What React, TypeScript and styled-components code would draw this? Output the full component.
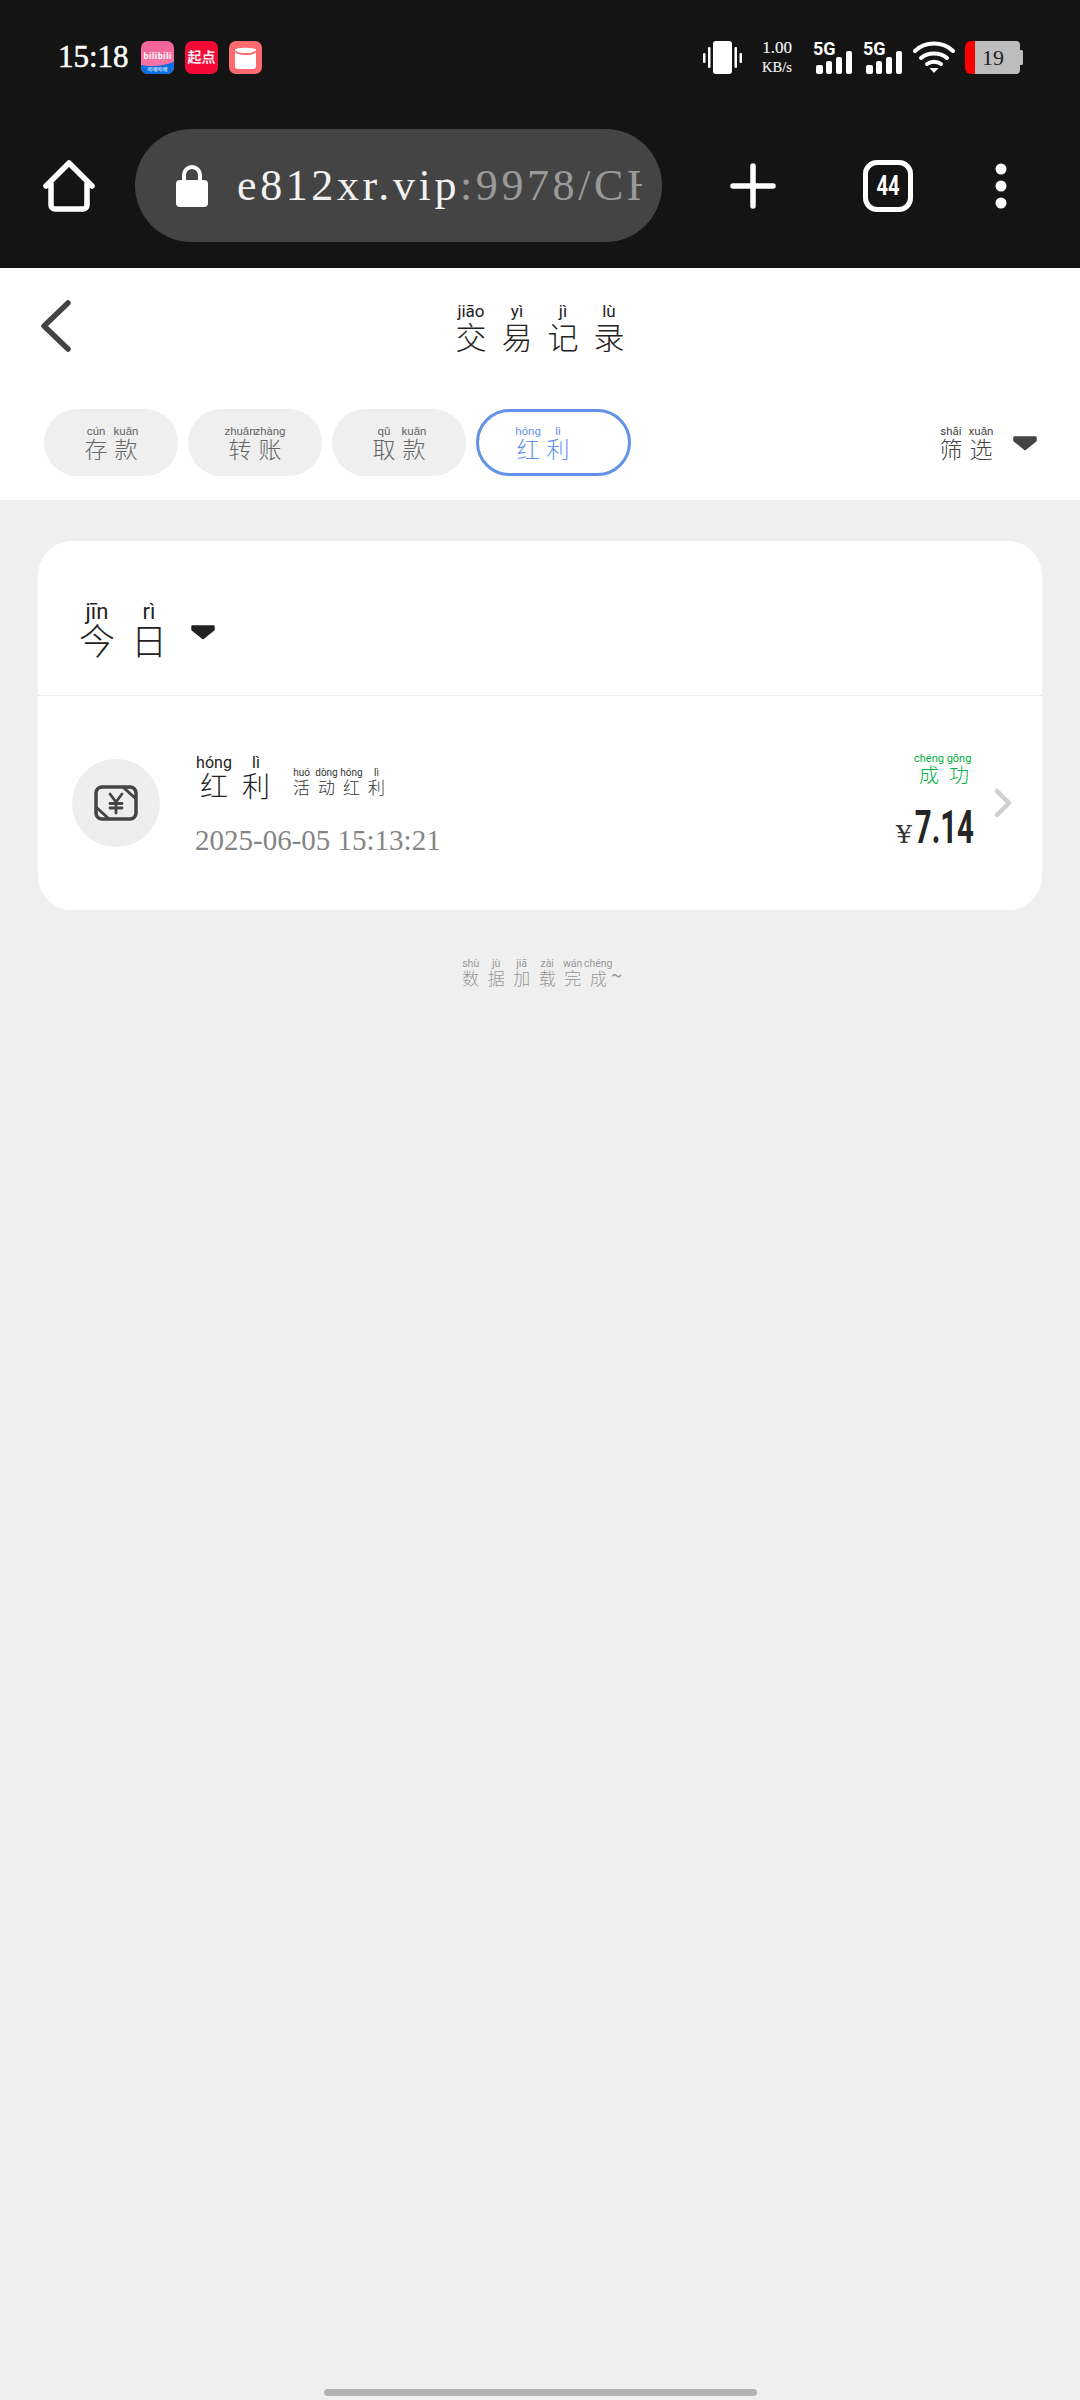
import React from "react";
import styled, { createGlobalStyle } from "styled-components";

const GlobalStyle = createGlobalStyle`
  html, body {
    margin: 0;
    padding: 0;
    background: #efefef;
  }
  * {
    box-sizing: border-box;
  }
`;

const WORD_SIZES = {
  title: { pitch: 46, han: 31, py: 17, pyLine: 18 },
  tab: { pitch: 30, han: 23, py: 11.5, pyLine: 12 },
  today: { pitch: 52, han: 36, py: 22, pyLine: 18 },
  rowTitle: { pitch: 42, han: 28, py: 16, pyLine: 16 },
  rowSub: { pitch: 25, han: 17, py: 10, pyLine: 10 },
  status: { pitch: 30, han: 20, py: 11, pyLine: 12 },
  footer: { pitch: 25.5, han: 17, py: 10.5, pyLine: 10 },
};

type WordSize = keyof typeof WORD_SIZES;

const Page = styled.div`
  width: 1080px;
  height: 2400px;
  display: flex;
  flex-direction: column;
  background: #efefef;
  font-family: "Noto Sans CJK SC", "Liberation Sans", sans-serif;
  overflow: hidden;
`;

const TopBar = styled.header`
  height: 268px;
  flex: none;
  background: #141414;
  padding-top: 40px;
`;

const StatusRow = styled.div`
  height: 34px;
  display: flex;
  align-items: center;
  padding-left: 58px;
`;

const Clock = styled.span`
  width: 83px;
  font: 400 31px/34px "Liberation Serif", serif;
  -webkit-text-stroke: 0.5px #fff;
  color: #fff;
`;

const AppIcons = styled.div`
  display: flex;
  gap: 11px;
`;

const StatusIcons = styled.div`
  display: flex;
  align-items: center;
  gap: 10px;
  margin-left: auto;
  padding-right: 57px;
`;

const NetSpeed = styled.div`
  width: 30px;
  margin: 0 11px 0 10px;
  display: flex;
  flex-direction: column;
  align-items: center;
  font-family: "Liberation Serif", serif;
  color: #eee;
`;

const NetValue = styled.span`
  font-size: 17px;
  line-height: 19px;
  -webkit-text-stroke: 0.2px #eee;
`;

const NetUnit = styled.span`
  font-size: 14.500px;
  line-height: 20px;
  white-space: nowrap;
  -webkit-text-stroke: 0.2px #eee;
`;

const Toolbar = styled.div`
  display: flex;
  align-items: center;
  margin-top: 55px;
  padding-left: 43px;
`;

const AddressPill = styled.div`
  width: 527px;
  height: 113px;
  margin-left: 40px;
  padding-left: 41px;
  display: flex;
  align-items: center;
  gap: 29px;
  border-radius: 57px;
  background: #444;
`;

const AddressText = styled.div`
  width: 405px;
  overflow: hidden;
  white-space: nowrap;
  font: 400 44px/56px "Liberation Serif", serif;
  letter-spacing: 3.6px;
  color: #f2f2f2;
`;

const AddressRest = styled.span`
  color: #9a9a9a;
`;

const PlusWrap = styled.div`
  margin-left: 68px;
  display: flex;
`;

const TabsCount = styled.div`
  width: 50px;
  height: 52px;
  margin-left: 87px;
  display: flex;
  align-items: center;
  justify-content: center;
  border: 5px solid #fff;
  border-radius: 14px;
  color: #fff;
`;

const TabsNumber = styled.span`
  display: inline-block;
  font: 700 28px/30px "Roboto", sans-serif;
  transform: scaleX(0.72);
`;

const DotsWrap = styled.div`
  margin-left: 82px;
  display: flex;
`;

const NavPanel = styled.section`
  height: 232px;
  flex: none;
  background: #fff;
  padding-top: 34px;
`;

const TitleRow = styled.div`
  display: grid;
  grid-template-columns: 1fr auto 1fr;
  align-items: start;
  height: 107px;
`;

const BackSlot = styled.div`
  padding: 0 0 0 41px;
  display: flex;
  margin-top: -2px;
`;

const TabRow = styled.div`
  display: flex;
  align-items: center;
  gap: 10px;
  padding: 0 42px 0 44px;
`;

const Tab = styled.div<{ $active?: boolean }>`
  height: 67px;
  display: flex;
  align-items: center;
  padding: ${(p) => (p.$active ? "0 55px 0 34px" : "0 37px")};
  border-radius: 34px;
  background: ${(p) => (p.$active ? "#fff" : "#efefef")};
  border: ${(p) => (p.$active ? "3px solid #6293e8" : "none")};
`;

const Filter = styled.div`
  margin-left: auto;
  display: flex;
  align-items: center;
  gap: 16px;
`;

const Card = styled.section`
  margin: 41px 38px 0;
  height: 369px;
  flex: none;
  border-radius: 34px;
  background: #fff;
`;

const CardHead = styled.div`
  height: 155px;
  display: flex;
  align-items: flex-start;
  gap: 15px;
  padding: 62px 0 0 33px;
  border-bottom: 1px solid #eaeaea;
`;

const CaretSlot = styled.div`
  padding-top: 21px;
  display: flex;
`;

const RecordRow = styled.div`
  height: 214px;
  display: flex;
  align-items: center;
  padding: 0 30px 0 34px;
`;

const IconCircle = styled.div`
  width: 88px;
  height: 88px;
  flex: none;
  display: flex;
  align-items: center;
  justify-content: center;
  border-radius: 50%;
  background: #eee;
`;

const RecordBody = styled.div`
  margin-left: 33px;
  padding-top: 6px;
  display: flex;
  flex-direction: column;
  gap: 24px;
`;

const RecordTitle = styled.div`
  display: flex;
  align-items: flex-end;
  gap: 12px;
`;

const RecordSub = styled.div`
  padding-bottom: 4px;
`;

const RecordDate = styled.div`
  margin-left: 2px;
  font: 400 29px/34px "Liberation Serif", serif;
  color: #858585;
`;

const RecordSide = styled.div`
  margin-left: auto;
  padding-bottom: 4px;
  display: flex;
  flex-direction: column;
  align-items: flex-end;
  gap: 20px;
`;

const Amount = styled.div`
  display: flex;
  align-items: baseline;
  gap: 4px;
  color: #262626;
`;

const Currency = styled.span`
  font: 400 25px/30px "DejaVu Serif", serif;
  color: #333;
`;

const AmountValue = styled.span`
  display: inline-block;
  width: 58px;
  font: 700 46px/44px "Roboto", sans-serif;
  white-space: nowrap;
  direction: rtl;
  transform: scaleX(0.64);
  transform-origin: right center;
`;

const RowArrow = styled.div`
  margin-left: 20px;
  display: flex;
`;

const FooterNote = styled.div`
  margin-top: 49px;
  display: flex;
  justify-content: center;
  align-items: flex-end;
  color: #999;
`;

const Tilde = styled.span`
  font-size: 20px;
  line-height: 22px;
`;

const HomeIndicator = styled.div`
  width: 433px;
  height: 7px;
  margin: auto auto 4px;
  border-radius: 4px;
  background: #b2b2b2;
`;

const WordRow = styled.div<{ $color: string }>`
  display: inline-flex;
  color: ${(p) => p.$color};
`;

const Cell = styled.div<{ $size: WordSize }>`
  width: ${(p) => WORD_SIZES[p.$size].pitch}px;
  display: flex;
  flex-direction: column;
  align-items: center;
`;

const Pinyin = styled.span<{ $size: WordSize }>`
  font-family: "Roboto", "Liberation Sans", sans-serif;
  font-weight: 400;
  font-size: ${(p) => WORD_SIZES[p.$size].py}px;
  line-height: ${(p) => WORD_SIZES[p.$size].pyLine}px;
  white-space: nowrap;
`;

const Han = styled.span<{ $size: WordSize }>`
  font-family: "Noto Sans CJK SC", sans-serif;
  font-weight: 300;
  font-size: ${(p) => WORD_SIZES[p.$size].han}px;
  line-height: ${(p) => WORD_SIZES[p.$size].han}px;
`;

const Word = ({
  text,
  pinyin,
  size,
  color = "#222",
}: {
  text: string;
  pinyin: string;
  size: WordSize;
  color?: string;
}) => {
  const syllables = pinyin.split(" ");
  return (
    <WordRow $color={color}>
      {Array.from(text).map((ch, i) => (
        <Cell key={i} $size={size}>
          <Pinyin $size={size}>{syllables[i]}</Pinyin>
          <Han $size={size}>{ch}</Han>
        </Cell>
      ))}
    </WordRow>
  );
};

const Caret = ({ color }: { color: string }) => (
  <svg width="26" height="16" viewBox="0 0 26 16">
    <path d="M2.500 2.500h21v3L13 14 2.500 5.500z" fill={color} stroke={color} strokeWidth="2.500" strokeLinejoin="round" />
  </svg>
);

const BilibiliIcon = () => (
  <svg width="33" height="33" viewBox="0 0 33 33">
    <defs>
      <linearGradient id="biliPink" x1="0" y1="0" x2="0" y2="1">
        <stop offset="0" stopColor="#f2619b" />
        <stop offset="1" stopColor="#fb7ba8" />
      </linearGradient>
    </defs>
    <rect width="33" height="33" rx="7" fill="url(#biliPink)" />
    <path d="M0 24q16 3 33-3v5a7 7 0 0 1-7 7H7a7 7 0 0 1-7-7z" fill="#0a6fe0" />
    <text x="16.5" y="18" textAnchor="middle" fontSize="9" fontWeight="700" fill="#fff" fontFamily="Roboto, sans-serif" textLength="28">bilibili</text>
    <text x="16.5" y="30" textAnchor="middle" fontSize="5" fill="#fff" fontFamily="Noto Sans CJK SC, sans-serif">哔哩哔哩</text>
  </svg>
);

const QidianIcon = () => (
  <svg width="33" height="33" viewBox="0 0 33 33">
    <rect width="33" height="33" rx="7" fill="#f40a37" />
    <text x="16.5" y="21" textAnchor="middle" fontSize="14" fontWeight="700" fill="#ffe9ee" fontFamily="Noto Sans CJK SC, sans-serif">起点</text>
  </svg>
);

const CupIcon = () => (
  <svg width="33" height="33" viewBox="0 0 33 33">
    <rect width="33" height="33" rx="7" fill="#fd6a6f" />
    <path d="M6 9c0-3 21-3 21 0v16a3 3 0 0 1-3 3H9a3 3 0 0 1-3-3z" fill="#fff" />
    <path d="M6 10c3 4 18 4 21 0" fill="none" stroke="#fd6a6f" strokeWidth="2" />
  </svg>
);

const VibrateIcon = () => (
  <svg width="39" height="33" viewBox="0 0 39 33" fill="#fff">
    <rect x="10" y="0" width="19" height="33" rx="3" />
    <rect x="5" y="6" width="2.500" height="21" rx="1" />
    <rect x="0" y="12" width="2.500" height="10" rx="1" />
    <rect x="31.5" y="6" width="2.500" height="21" rx="1" />
    <rect x="36.5" y="12" width="2.500" height="10" rx="1" />
  </svg>
);

const SignalIcon = () => (
  <svg width="40" height="35" viewBox="0 0 40 35" fill="#fff">
    <text x="0" y="15" fontSize="18" fontWeight="700" fontFamily="Roboto, sans-serif">5G</text>
    <rect x="3" y="25" width="7" height="9" rx="2" />
    <rect x="13" y="21" width="6" height="13" rx="2" />
    <rect x="23" y="17" width="6" height="17" rx="2" />
    <rect x="33" y="11" width="6" height="23" rx="2" />
  </svg>
);

const WifiIcon = () => (
  <svg width="42" height="34" viewBox="0 0 42 34" fill="none" stroke="#fff" strokeWidth="4" strokeLinecap="round">
    <path d="M2 11C12 1 30 1 40 11" />
    <path d="M8 18c7-6 19-6 26 0" />
    <path d="M14 24c4-3 10-3 14 0" />
    <path d="M16.5 28h9L21 33z" fill="#fff" stroke="none" />
  </svg>
);

const BatteryIcon = () => (
  <svg width="58" height="33" viewBox="0 0 58 33">
    <path d="M10 0h41a4 4 0 0 1 4 4v5h1.500a1.500 1.500 0 0 1 1.500 1.500v12a1.500 1.500 0 0 1-1.500 1.500H55v5a4 4 0 0 1-4 4H10z" fill="#bdbdbd" />
    <path d="M10 0H6a6 6 0 0 0-6 6v21a6 6 0 0 0 6 6h4z" fill="#fb0000" />
    <text x="17" y="24" fontSize="22" fill="#222" fontFamily="Liberation Serif, serif">19</text>
  </svg>
);

const HomeIcon = () => (
  <svg width="52" height="52" viewBox="0 0 52 52" fill="none" stroke="#fff" strokeWidth="5.500" strokeLinecap="round" strokeLinejoin="round">
    <path d="M3 26L26 3l23 23M8 24v21a4 4 0 0 0 4 4h28a4 4 0 0 0 4-4V24" />
  </svg>
);

const LockIcon = () => (
  <svg width="32" height="42" viewBox="0 0 32 42">
    <path d="M8 17V10a8 8 0 0 1 16 0v7" fill="none" stroke="#fff" strokeWidth="4" />
    <rect x="0" y="15" width="32" height="27" rx="4" fill="#fff" />
  </svg>
);

const PlusIcon = () => (
  <svg width="46" height="46" viewBox="0 0 46 46" stroke="#fff" strokeWidth="5.500" strokeLinecap="round">
    <path d="M23 3v40M3 23h40" />
  </svg>
);

const DotsIcon = () => (
  <svg width="12" height="46" viewBox="0 0 12 46" fill="#fff">
    <circle cx="6" cy="6" r="5.500" />
    <circle cx="6" cy="23" r="5.500" />
    <circle cx="6" cy="40" r="5.500" />
  </svg>
);

const BackIcon = () => (
  <svg width="30" height="52" viewBox="0 0 30 52" fill="none" stroke="#444" strokeWidth="5.500" strokeLinecap="round" strokeLinejoin="round">
    <path d="M27 3L3 26l24 23" />
  </svg>
);

const ForwardIcon = () => (
  <svg width="18" height="30" viewBox="0 0 18 30" fill="none" stroke="#cfcfcf" strokeWidth="4.500" strokeLinecap="round" strokeLinejoin="round">
    <path d="M3 3l12 12L3 27" />
  </svg>
);

const BonusIcon = () => (
  <svg width="44" height="36" viewBox="0 0 44 36" fill="none" stroke="#444" strokeLinecap="round" strokeLinejoin="round">
    <rect x="2" y="2" width="40" height="32" rx="6" strokeWidth="3.500" />
    <path d="M30 3l11 10" strokeWidth="3" />
    <path d="M3 23l11 10" strokeWidth="3" />
    <path d="M16 9l6 8 6-8M22 17v11M16 18.500h12M16 23h12" strokeWidth="2.800" />
  </svg>
);

export default function App() {
  return (
    <Page>
      <GlobalStyle />
      <TopBar>
        <StatusRow>
          <Clock>15:18</Clock>
          <AppIcons>
            <BilibiliIcon />
            <QidianIcon />
            <CupIcon />
          </AppIcons>
          <StatusIcons>
            <VibrateIcon />
            <NetSpeed>
              <NetValue>1.00</NetValue>
              <NetUnit>KB/s</NetUnit>
            </NetSpeed>
            <SignalIcon />
            <SignalIcon />
            <WifiIcon />
            <BatteryIcon />
          </StatusIcons>
        </StatusRow>
        <Toolbar>
          <HomeIcon />
          <AddressPill>
            <LockIcon />
            <AddressText>
              e812xr.vip<AddressRest>:9978/CHANNEL</AddressRest>
            </AddressText>
          </AddressPill>
          <PlusWrap>
            <PlusIcon />
          </PlusWrap>
          <TabsCount>
            <TabsNumber>44</TabsNumber>
          </TabsCount>
          <DotsWrap>
            <DotsIcon />
          </DotsWrap>
        </Toolbar>
      </TopBar>

      <NavPanel>
        <TitleRow>
          <BackSlot>
            <BackIcon />
          </BackSlot>
          <Word text="交易记录" pinyin="jiāo yì jì lù" size="title" />
        </TitleRow>
        <TabRow>
          <Tab>
            <Word text="存款" pinyin="cún kuǎn" size="tab" color="#666" />
          </Tab>
          <Tab>
            <Word text="转账" pinyin="zhuǎn zhàng" size="tab" color="#666" />
          </Tab>
          <Tab>
            <Word text="取款" pinyin="qǔ kuǎn" size="tab" color="#666" />
          </Tab>
          <Tab $active>
            <Word text="红利" pinyin="hóng lì" size="tab" color="#6293e8" />
          </Tab>
          <Filter>
            <Word text="筛选" pinyin="shāi xuǎn" size="tab" color="#444" />
            <Caret color="#444" />
          </Filter>
        </TabRow>
      </NavPanel>

      <Card>
        <CardHead>
          <Word text="今日" pinyin="jīn rì" size="today" />
          <CaretSlot>
            <Caret color="#222" />
          </CaretSlot>
        </CardHead>
        <RecordRow>
          <IconCircle>
            <BonusIcon />
          </IconCircle>
          <RecordBody>
            <RecordTitle>
              <Word text="红利" pinyin="hóng lì" size="rowTitle" />
              <RecordSub>
                <Word text="活动红利" pinyin="huó dòng hóng lì" size="rowSub" color="#333" />
              </RecordSub>
            </RecordTitle>
            <RecordDate>2025-06-05 15:13:21</RecordDate>
          </RecordBody>
          <RecordSide>
            <Word text="成功" pinyin="chéng gōng" size="status" color="#00b140" />
            <Amount>
              <Currency>¥</Currency>
              <AmountValue>7.14</AmountValue>
            </Amount>
          </RecordSide>
          <RowArrow>
            <ForwardIcon />
          </RowArrow>
        </RecordRow>
      </Card>

      <FooterNote>
        <Word text="数据加载完成" pinyin="shù jù jiā zài wán chéng" size="footer" color="#999" />
        <Tilde>~</Tilde>
      </FooterNote>

      <HomeIndicator />
    </Page>
  );
}
